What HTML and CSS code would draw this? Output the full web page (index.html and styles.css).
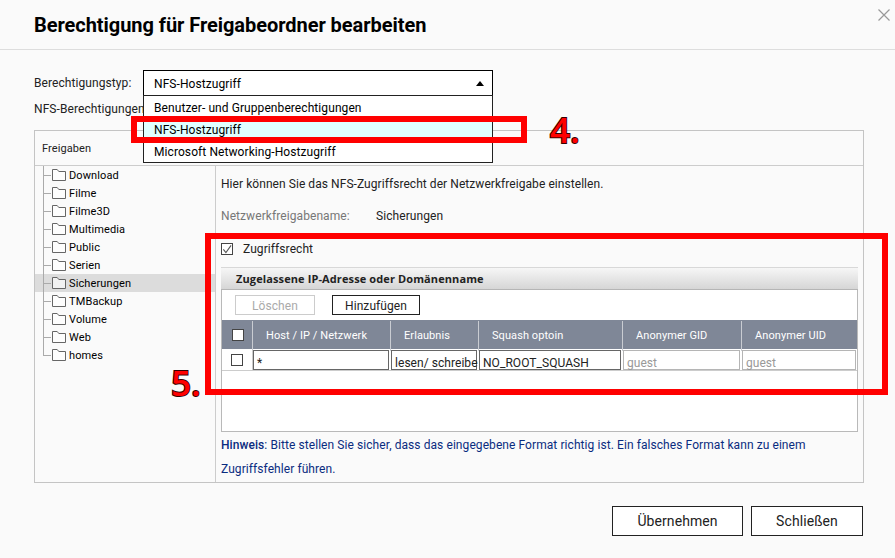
FILE: index.html
```
<!DOCTYPE html>
<html lang="de">
<head>
    <meta charset="UTF-8">
    <meta name="viewport" content="width=device-width, initial-scale=1.0">
    <title>Berechtigung für Freigabeordner bearbeiten</title>
    <link rel="stylesheet" href="styles.css">
</head>
<body>
    <svg class="defs" width="0" height="0">
        <symbol id="folder" viewBox="0 0 14 12">
            <path d="M.5 11.5V.5h4.7l1.6 2h6.7v9z" fill="#fff" fill-opacity=".6" stroke="#666"/>
        </symbol>
    </svg>

    <header class="header">
        <h1>Berechtigung für Freigabeordner bearbeiten</h1>
        <svg class="close" width="12" height="12" viewBox="0 0 12 12">
            <path d="M.5 .5l11 11M11.5 .5l-11 11" stroke="#999" stroke-width="1.2" fill="none"/>
        </svg>
    </header>

    <main class="content">
        <div class="type-row">
            <label class="type-label">Berechtigungstyp:</label>
            <div class="select">
                <span>NFS-Hostzugriff</span>
                <svg width="8" height="5" viewBox="0 0 8 5"><path d="M4 0l4 5H0z"/></svg>
                <ul class="options">
                    <li>Benutzer- und Gruppenberechtigungen</li>
                    <li class="active">NFS-Hostzugriff</li>
                    <li>Microsoft Networking-Hostzugriff</li>
                </ul>
            </div>
        </div>
        <p class="sub-label">NFS-Berechtigungen</p>

        <section class="panel">
            <div class="panel-head">Freigaben</div>
            <div class="panel-body">
                <ul class="tree">
                    <li><svg class="folder"><use href="#folder"/></svg><span>Download</span></li>
                    <li><svg class="folder"><use href="#folder"/></svg><span>Filme</span></li>
                    <li><svg class="folder"><use href="#folder"/></svg><span>Filme3D</span></li>
                    <li><svg class="folder"><use href="#folder"/></svg><span>Multimedia</span></li>
                    <li><svg class="folder"><use href="#folder"/></svg><span>Public</span></li>
                    <li><svg class="folder"><use href="#folder"/></svg><span>Serien</span></li>
                    <li class="selected"><svg class="folder"><use href="#folder"/></svg><span>Sicherungen</span></li>
                    <li><svg class="folder"><use href="#folder"/></svg><span>TMBackup</span></li>
                    <li><svg class="folder"><use href="#folder"/></svg><span>Volume</span></li>
                    <li><svg class="folder"><use href="#folder"/></svg><span>Web</span></li>
                    <li><svg class="folder"><use href="#folder"/></svg><span>homes</span></li>
                </ul>

                <div class="detail">
                    <p class="intro">Hier können Sie das NFS-Zugriffsrecht der Netzwerkfreigabe einstellen.</p>
                    <p class="share"><span class="share-label">Netzwerkfreigabename:</span><span>Sicherungen</span></p>
                    <div class="access">
                        <span class="check"><svg width="10" height="10" viewBox="0 0 11 11"><path d="M1.5 6l2.8 3.5L10 1.5" fill="none" stroke="#555" stroke-width="1.2"/></svg></span>
                        <span>Zugriffsrecht</span>
                    </div>

                    <h2 class="caption">Zugelassene IP-Adresse oder Domänenname</h2>
                    <div class="hosts">
                        <div class="toolbar">
                            <button class="tool disabled">Löschen</button>
                            <button class="tool add">Hinzufügen</button>
                        </div>
                        <div class="grid head">
                            <div><span class="check"></span></div>
                            <div>Host / IP / Netzwerk</div>
                            <div>Erlaubnis</div>
                            <div>Squash optoin</div>
                            <div>Anonymer GID</div>
                            <div>Anonymer UID</div>
                        </div>
                        <div class="grid row">
                            <div class="pick"><span class="check"></span></div>
                            <div class="field">*</div>
                            <div class="field">lesen/ schreibe</div>
                            <div class="field">NO_ROOT_SQUASH</div>
                            <div class="field muted">guest</div>
                            <div class="field muted">guest</div>
                        </div>
                    </div>
                    <p class="hint"><b>Hinweis</b>: Bitte stellen Sie sicher, dass das eingegebene Format richtig ist. Ein falsches Format kann zu einem<br>Zugriffsfehler führen.</p>
                </div>
            </div>
        </section>

        <footer class="actions">
            <button class="btn apply">Übernehmen</button>
            <button class="btn cancel">Schließen</button>
        </footer>
    </main>

    <!-- step markers -->
    <div class="mark mark-4"></div>
    <div class="step step-4">4.</div>
    <div class="mark mark-5"></div>
    <div class="step step-5">5.</div>
</body>
</html>
```
FILE: styles.css
```
* {
    margin: 0;
    padding: 0;
    box-sizing: border-box;
}

body {
    width: 895px;
    height: 558px;
    overflow: hidden;
    position: relative;
    background: #fafafa;
    color: #222;
    font: 12px/18px Roboto, sans-serif;
    letter-spacing: 0.08px;
}

ul {
    list-style: none;
}

.defs {
    position: absolute;
}

.header {
    height: 50px;
    padding: 0 5px 0 34px;
    border-bottom: 1px solid #ddd;
    display: flex;
    justify-content: space-between;
}

.header h1 {
    font-size: 20px;
    line-height: 50px;
    font-weight: 700;
    letter-spacing: -0.05px;
    color: #000;
}

.close {
    margin-top: 9px;
}

.content {
    padding: 20px 31px 0 34px;
}

.type-row {
    display: flex;
    height: 26px;
}

.type-label {
    width: 109px;
    line-height: 26px;
}

.select {
    position: relative;
    width: 350px;
    height: 26px;
    padding: 1px 8px 0 10px;
    border: 1px solid #000;
    background: #fff;
    color: #000;
    display: flex;
    align-items: center;
    justify-content: space-between;
}

.options {
    position: absolute;
    z-index: 2;
    top: 24px;
    left: -1px;
    width: 350px;
    border: 1px solid #222;
    background: #fff;
}

.options li {
    height: 22px;
    padding-left: 10px;
    line-height: 24px;
}

.options .active {
    background: #e0ffff;
}

.sub-label {
    height: 34px;
    padding-top: 4px;
}

.panel {
    width: 830px;
    height: 353px;
    border: 1px solid #c4c4c4;
}

.panel-head {
    height: 35px;
    padding-left: 7px;
    border-bottom: 1px solid #ccc;
    font-size: 11px;
    line-height: 36px;
}

.panel-body {
    display: flex;
    height: 316px;
}

.tree {
    width: 181px;
    border-right: 1px solid #ccc;
    color: #000;
    font-size: 11px;
    letter-spacing: 0.12px;
}

.tree li {
    display: flex;
    align-items: center;
    height: 18px;
    /* trunk and branch lines */
    background: linear-gradient(#aaa, #aaa) 8px 0 / 1px 18px no-repeat,
        linear-gradient(#aaa, #aaa) 8px 9px / 8px 1px no-repeat;
    padding-left: 17px;
}

.tree li:last-child {
    background-size: 1px 9px, 8px 1px;
}

.tree li span {
    padding-top: 2px;
}

.tree .selected {
    background-color: #dcdcdc;
}

.folder {
    width: 14px;
    height: 12px;
    margin-right: 3px;
}

.detail {
    padding-left: 5px;
    width: 642px;
}

.intro {
    padding-top: 9px;
    letter-spacing: 0.06px;
}

.share {
    display: flex;
    padding-top: 14px;
}

.share-label {
    width: 155px;
    color: #777;
}

.access {
    display: flex;
    align-items: center;
    gap: 10px;
    height: 18px;
    margin-top: 15px;
}

.check {
    display: block;
    flex: none;
    width: 12px;
    height: 12px;
    border: 1px solid #444;
    background: #fff;
}

.check svg {
    display: block;
}

.caption {
    width: 637px;
    height: 23px;
    margin-top: 9px;
    padding-left: 15px;
    border-top: 1px solid #d8d8d8;
    border-bottom: 1px solid #b5b5b5;
    background: linear-gradient(#f6f6f6, #d6d6d6);
    font: 700 11px/22px "Open Sans", sans-serif;
    letter-spacing: 0.11px;
}

.hosts {
    width: 637px;
    height: 142px;
    border: 1px solid #b9b9b9;
    border-top: 0;
    background: #fff;
}

.toolbar {
    display: flex;
    gap: 17px;
    height: 30px;
    padding: 5px 13px;
}

button {
    font-family: inherit;
    letter-spacing: inherit;
    background: #fff;
    border: 1px solid #222;
    color: #222;
}

.tool {
    width: 80px;
    height: 20px;
    padding-top: 2px;
    font-size: 12px;
    line-height: 16px;
}

.tool.add {
    width: 88px;
}

.tool.disabled {
    border-color: #ccc;
    color: #aaa;
}

.grid {
    display: grid;
    grid-template-columns: 31px 138px 88px 144px 119px 115px;
}

.head {
    height: 29px;
    background: #7f8797;
    color: #fff;
    font-size: 11px;
    line-height: 30px;
}

.head div {
    padding-left: 13px;
    margin-top: 1px;
    border-right: 1px solid #c9ccd2;
}

.head div:first-child {
    padding: 8px 0 0 10px;
}

.head div:last-child {
    border-right: 0;
}

.row {
    height: 22px;
    padding-top: 1px;
    border-bottom: 1px solid #ccc;
}

.pick {
    padding: 4px 0 0 9px;
    border-right: 1px solid #ccc;
}

.field {
    height: 20px;
    margin-right: 2px;
    padding: 3px 0 0 3px;
    border: 1px solid #666;
    letter-spacing: 0.05px;
    white-space: nowrap;
}

.field.muted {
    border-color: #b5b5b5;
    color: #999;
}

.field:last-child {
    margin-right: 1px;
}

.hint {
    padding-top: 1px;
    line-height: 24px;
    letter-spacing: 0.075px;
    color: #0a2c80;
}

.hint b {
    font-weight: 500;
}

.actions {
    display: flex;
    justify-content: flex-end;
    gap: 8px;
    padding: 23px 1px 0 0;
}

.btn {
    height: 30px;
    font-size: 14px;
}

.apply {
    width: 131px;
}

.cancel {
    width: 112px;
}

/* red frames and numbers drawn over the dialog */
.mark {
    position: absolute;
    z-index: 3;
    border: 6px solid #f00;
}

.mark-4 {
    left: 131px;
    top: 116px;
    width: 396px;
    height: 27px;
}

.mark-5 {
    left: 205px;
    top: 233px;
    width: 683px;
    height: 162px;
}

.step {
    position: absolute;
    z-index: 3;
    font: 600 35px/36px "Open Sans", sans-serif;
    letter-spacing: 0;
    color: #f00;
    -webkit-text-stroke: 2px #300;
    paint-order: stroke fill;
}

.step-4 {
    left: 550px;
    top: 112px;
}

.step-5 {
    left: 171px;
    top: 365px;
}
```
